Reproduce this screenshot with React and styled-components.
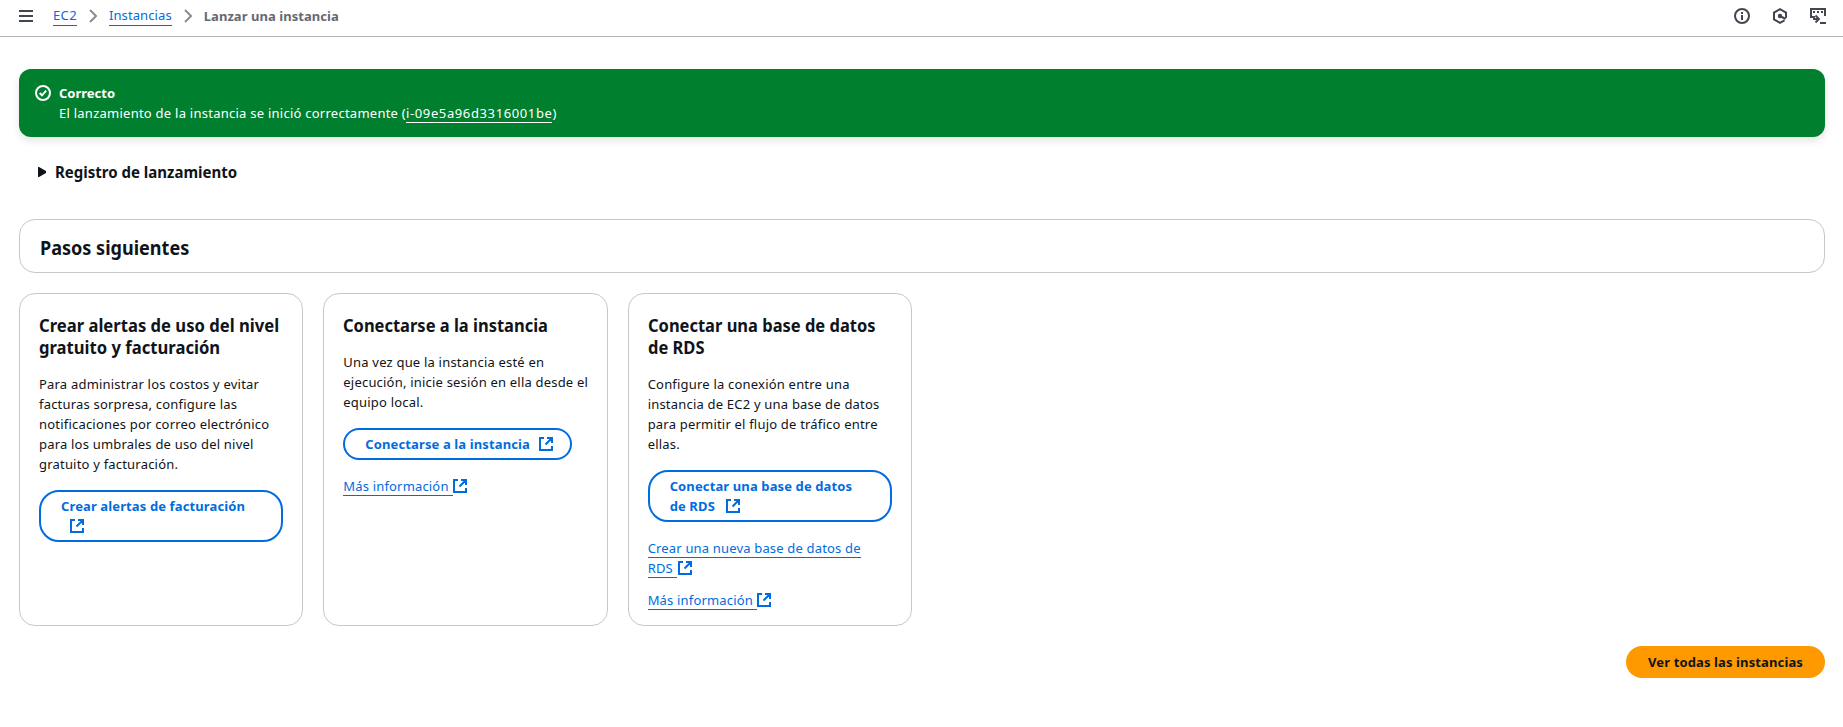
import React from "react";
import styled, { createGlobalStyle } from "styled-components";

const GlobalStyle = createGlobalStyle`
  * { box-sizing: border-box; }
  body {
    margin: 0;
    background: #fff;
    color: #0f141a;
    font: 400 13px/20px "Noto Sans", "Open Sans", sans-serif;
  }
  h1, h2, h3, p { margin: 0; }
`;

const Page = styled.div`
  min-height: 727px;
  background: #fff;
`;

const TopBar = styled.header`
  display: flex;
  align-items: center;
  justify-content: space-between;
  height: 37px;
  padding: 0 17px 5px 19px;
  border-bottom: 1px solid #b4b4bb;
  color: #424650;
`;

const Trail = styled.nav`
  display: flex;
  align-items: center;
`;

const MenuIcon = styled.svg`
  width: 14px;
  height: 12px;
  margin-right: 20px;
`;

const Chevron = styled.svg`
  width: 8px;
  height: 14px;
  margin: 0 12px;
  color: #8c8c94;
`;

const Current = styled.span`
  color: #656871;
  font-weight: 700;
  letter-spacing: 0.05px;
`;

const Tools = styled.div`
  display: flex;
  gap: 22px;
`;

const ToolIcon = styled.svg`
  width: 16px;
  height: 16px;
`;

const Link = styled.a`
  color: ${(p) => (p.$light ? "#fff" : "#006ce0")};
  border-bottom: 1px solid currentColor;
  letter-spacing: ${(p) => p.$track || 0.17}px;
`;

const Main = styled.main`
  padding: 32px 18px 0 19px;
`;

const Flash = styled.section`
  display: flex;
  gap: 8px;
  height: 68px;
  padding: 14px 16px;
  border-radius: 12px;
  background: #00802f;
  color: #fff;
  box-shadow: 0 4px 8px rgba(0, 7, 22, 0.1);
`;

const FlashIcon = styled.svg`
  width: 16px;
  height: 16px;
  margin-top: 2px;
`;

const FlashTitle = styled.div`
  font-weight: 700;
`;

const FlashText = styled.div`
  letter-spacing: 0.25px;
`;

const Log = styled.div`
  display: flex;
  align-items: center;
  gap: 9px;
  height: 20px;
  margin: 25px 0 37px;
  padding-left: 19px;
`;

const Caret = styled.svg`
  width: 8px;
  height: 10px;
`;

const Heading = styled.h2`
  font-weight: 700;
  transform-origin: left center;
`;

const LogTitle = styled(Heading)`
  font-size: 16px;
  line-height: 20px;
  transform: scaleX(0.938);
`;

const StepsHeader = styled.section`
  display: flex;
  align-items: center;
  height: 54px;
  padding: 3px 20px 0;
  border: 1px solid #c6c6cd;
  border-radius: 16px;
`;

const StepsTitle = styled(Heading)`
  font-size: 20px;
  line-height: 24px;
  transform: scaleX(0.902);
`;

const Cards = styled.div`
  display: grid;
  grid-template-columns: repeat(6, minmax(0, 1fr));
  gap: 20px;
  margin-top: 20px;
`;

const Card = styled.article`
  display: flex;
  flex-direction: column;
  align-items: flex-start;
  height: 333px;
  padding: 20px 19px;
  border: 1px solid #c6c6cd;
  border-radius: 16px;
  white-space: nowrap;
`;

const CardTitle = styled(Heading)`
  font-size: 18px;
  line-height: 22px;
  transform: scaleX(${(p) => p.$narrow || 0.916});
`;

const CardText = styled.p`
  margin: 16px 0;
  letter-spacing: 0.2px;
`;

const OutlineButton = styled.button`
  width: ${(p) => p.$width}px;
  padding: 4px 20px;
  border: 2px solid #006ce0;
  border-radius: 20px;
  background: #fff;
  color: #006ce0;
  font: inherit;
  font-weight: 700;
  letter-spacing: 0.12px;
  text-align: left;
  white-space: nowrap;
`;

const CardLinkRow = styled.div`
  margin-top: ${(p) => p.$gap || 16}px;
`;

const CardLink = styled(Link)`
  padding-right: 1px;
`;

const ExternalSvg = styled.svg`
  width: 14px;
  height: 14px;
  margin-left: ${(p) => p.$gap || 0}px;
  vertical-align: -2px;
  color: #006ce0;
`;

const Footer = styled.footer`
  display: flex;
  justify-content: flex-end;
  margin-top: 20px;
`;

const PrimaryButton = styled.button`
  width: 199px;
  height: 32px;
  padding: 0;
  border: 0;
  border-radius: 16px;
  background: #ff9900;
  color: #0f141a;
  font: inherit;
  font-weight: 700;
  letter-spacing: 0.12px;
`;

const External = ({ gap }) => (
  <ExternalSvg $gap={gap} viewBox="0 0 14 14" fill="none" stroke="currentColor" strokeWidth="2">
    <path d="M5 1H1v12h12V9M8 1h5v5M13 1 6.5 7.5" />
  </ExternalSvg>
);

const Separator = () => (
  <Chevron viewBox="0 0 8 14" fill="none" stroke="currentColor" strokeWidth="2">
    <path d="m1 1 6 6-6 6" />
  </Chevron>
);

export default function App() {
  return (
    <Page>
      <GlobalStyle />
      <TopBar>
        <Trail>
          <MenuIcon viewBox="0 0 14 12" fill="currentColor">
            <path d="M0 0h14v2H0zM0 5h14v2H0zM0 10h14v2H0z" />
          </MenuIcon>
          <Link $track={0.35}>EC2</Link>
          <Separator />
          <Link $track={0.1}>Instancias</Link>
          <Separator />
          <Current>Lanzar una instancia</Current>
        </Trail>
        <Tools>
          <ToolIcon viewBox="0 0 16 16" fill="none" stroke="currentColor" strokeWidth="2">
            <circle cx="8" cy="8" r="7" />
            <path d="M8 4v2M8 7v5" />
          </ToolIcon>
          <ToolIcon viewBox="0 0 16 16" fill="none" stroke="currentColor" strokeWidth="2">
            <path d="M14 10V4.500L8 1.200 2 4.500v7l6 3.300 4.500-2.500" />
            <circle cx="8" cy="8" r="2.200" fill="currentColor" stroke="none" />
            <path d="m8 8 5.500 3" />
          </ToolIcon>
          <ToolIcon viewBox="0 0 16 16" fill="none" stroke="currentColor" strokeWidth="2">
            <path d="M4 9H1V1h14v7M10 15h6" />
            <path d="M4 8v3h4M5.500 7.500 9 11l-3.500 3.500" strokeWidth="1.800" />
            <path d="M3 4h2M7 4h2M11 4h2" />
          </ToolIcon>
        </Tools>
      </TopBar>
      <Main>
        <Flash>
          <FlashIcon viewBox="0 0 16 16" fill="none" stroke="currentColor" strokeWidth="2">
            <circle cx="8" cy="8" r="7" />
            <path d="m4.700 8 2.300 2.300 4.200-4.600" />
          </FlashIcon>
          <div>
            <FlashTitle>Correcto</FlashTitle>
            <FlashText>
              El lanzamiento de la instancia se inició correctamente (
              <Link $light $track={0.62}>i-09e5a96d3316001be</Link>)
            </FlashText>
          </div>
        </Flash>
        <Log>
          <Caret viewBox="0 0 8 10" fill="currentColor">
            <path d="M0 0h1l7 4v2l-7 4H0z" />
          </Caret>
          <LogTitle as="h3">Registro de lanzamiento</LogTitle>
        </Log>
        <StepsHeader>
          <StepsTitle>Pasos siguientes</StepsTitle>
        </StepsHeader>
        <Cards>
          <Card>
            <CardTitle $narrow={0.924}>
              Crear alertas de uso del nivel
              <br />
              gratuito y facturación
            </CardTitle>
            <CardText>
              Para administrar los costos y evitar
              <br />
              facturas sorpresa, configure las
              <br />
              notificaciones por correo electrónico
              <br />
              para los umbrales de uso del nivel
              <br />
              gratuito y facturación.
            </CardText>
            <OutlineButton $width={244}>
              Crear alertas de facturación
              <br />
              <External gap={9} />
            </OutlineButton>
          </Card>
          <Card>
            <CardTitle>Conectarse a la instancia</CardTitle>
            <CardText>
              Una vez que la instancia esté en
              <br />
              ejecución, inicie sesión en ella desde el
              <br />
              equipo local.
            </CardText>
            <OutlineButton $width={229}>
              Conectarse a la instancia
              <External gap={9} />
            </OutlineButton>
            <CardLinkRow>
              <CardLink>Más información&nbsp;</CardLink>
              <External />
            </CardLinkRow>
          </Card>
          <Card>
            <CardTitle>
              Conectar una base de datos
              <br />
              de RDS
            </CardTitle>
            <CardText>
              Configure la conexión entre una
              <br />
              instancia de EC2 y una base de datos
              <br />
              para permitir el flujo de tráfico entre
              <br />
              ellas.
            </CardText>
            <OutlineButton $width={244}>
              Conectar una base de datos
              <br />
              de RDS
              <External gap={11} />
            </OutlineButton>
            <CardLinkRow>
              <CardLink>
                Crear una nueva base de datos de
                <br />
                RDS&nbsp;
              </CardLink>
              <External gap={1} />
            </CardLinkRow>
            <CardLinkRow $gap={12}>
              <CardLink>Más información&nbsp;</CardLink>
              <External />
            </CardLinkRow>
          </Card>
        </Cards>
        <Footer>
          <PrimaryButton>Ver todas las instancias</PrimaryButton>
        </Footer>
      </Main>
    </Page>
  );
}
